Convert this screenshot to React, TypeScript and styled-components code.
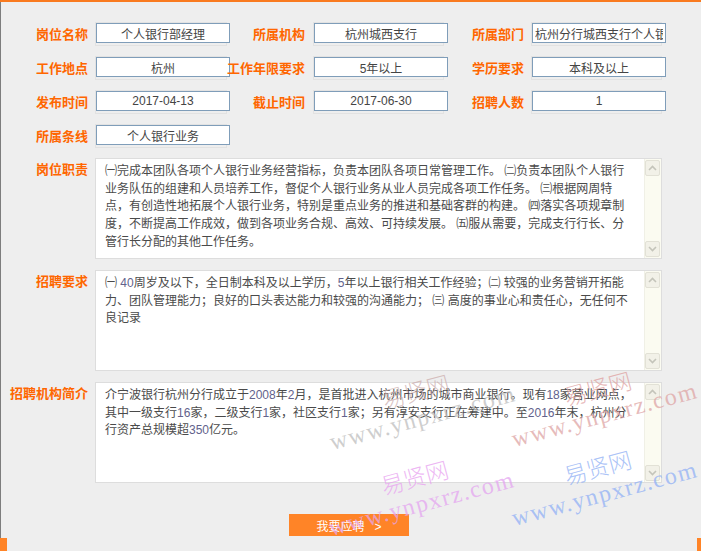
import React from 'react';
import styled, { createGlobalStyle } from 'styled-components';

const GlobalStyle = createGlobalStyle`
  html, body {
    margin: 0;
    padding: 0;
    background: #eeeeee;
  }
  body {
    font-family: "Liberation Sans", "Noto Sans CJK SC", sans-serif;
    font-size: 12px;
    color: #444;
  }
`;

type Field = { label: string; value: string; left?: boolean };

const infoRows: Field[][] = [
  [
    { label: '岗位名称', value: '个人银行部经理' },
    { label: '所属机构', value: '杭州城西支行' },
    { label: '所属部门', value: '杭州分行城西支行个人银行部', left: true },
  ],
  [
    { label: '工作地点', value: '杭州' },
    { label: '工作年限要求', value: '5年以上' },
    { label: '学历要求', value: '本科及以上' },
  ],
  [
    { label: '发布时间', value: '2017-04-13' },
    { label: '截止时间', value: '2017-06-30' },
    { label: '招聘人数', value: '1' },
  ],
  [{ label: '所属条线', value: '个人银行业务' }],
];

const labelPads = [7, 8, 7];

const textBlocks = [
  {
    label: '岗位职责',
    lines: [
      '㈠完成本团队各项个人银行业务经营指标，负责本团队各项日常管理工作。 ㈡负责本团队个人银行',
      '业务队伍的组建和人员培养工作，督促个人银行业务从业人员完成各项工作任务。 ㈢根据网周特',
      '点，有创造性地拓展个人银行业务，特别是重点业务的推进和基础客群的构建。 ㈣落实各项规章制',
      '度，不断提高工作成效，做到各项业务合规、高效、可持续发展。 ㈤服从需要，完成支行行长、分',
      '管行长分配的其他工作任务。',
    ],
  },
  {
    label: '招聘要求',
    lines: [
      '㈠ 40周岁及以下，全日制本科及以上学历，5年以上银行相关工作经验；㈡ 较强的业务营销开拓能',
      '力、团队管理能力；良好的口头表达能力和较强的沟通能力； ㈢ 高度的事业心和责任心，无任何不',
      '良记录',
    ],
  },
  {
    label: '招聘机构简介',
    lines: [
      '介宁波银行杭州分行成立于2008年2月，是首批进入杭州市场的城市商业银行。现有18家营业网点，',
      '其中一级支行16家，二级支行1家，社区支行1家；另有淳安支行正在筹建中。至2016年末，杭州分',
      '行资产总规模超350亿元。',
    ],
  },
];

const watermarks = [
  { x: 419, y: 404, title: 'rgba(205, 175, 175, 0.75)', url: 'rgba(190, 190, 190, 0.75)' },
  { x: 601, y: 401, title: 'rgba(222, 160, 160, 0.75)', url: 'rgba(222, 165, 165, 0.75)' },
  { x: 418, y: 490, title: 'rgba(232, 160, 240, 0.75)', url: 'rgba(228, 165, 240, 0.75)' },
  { x: 601, y: 480, title: 'rgba(150, 180, 245, 0.8)', url: 'rgba(150, 180, 245, 0.8)' },
];

const withNumbers = (line: string) =>
  line.split(/(\d+)/).map((part, i) => (/^\d+$/.test(part) ? <Num key={i}>{part}</Num> : part));

const Chevron = ({ up }: { up?: boolean }) => (
  <svg width="9" height="6" viewBox="0 0 9 6">
    <polyline
      points={up ? '1,5 4.5,1.5 8,5' : '1,1 4.5,4.5 8,1'}
      fill="none"
      stroke="#c4c4ba"
      strokeWidth="1.6"
    />
  </svg>
);

export default function App() {
  return (
    <Page>
      <GlobalStyle />
      <TopBar />
      <Panel>
        <InfoGrid>
          {infoRows.map((row) =>
            row.map((f, i) => (
              <React.Fragment key={f.label}>
                <Label $pad={labelPads[i]}>{f.label}</Label>
                <FieldBox>
                  <Input readOnly value={f.value} $left={f.left} />
                </FieldBox>
              </React.Fragment>
            ))
          )}
        </InfoGrid>

        <Blocks>
          {textBlocks.map((b) => (
            <BlockRow key={b.label}>
              <BlockLabel>{b.label}</BlockLabel>
              <TextBox>
                <TextContent>
                  {b.lines.map((l, i) => (
                    <Line key={i}>{withNumbers(l)}</Line>
                  ))}
                </TextContent>
                <ScrollBar>
                  <ScrollBtn>
                    <Chevron up />
                  </ScrollBtn>
                  <ScrollBtn>
                    <Chevron />
                  </ScrollBtn>
                </ScrollBar>
              </TextBox>
            </BlockRow>
          ))}
        </Blocks>

        <ButtonRow>
          <ApplyButton>
            我要应聘<Arrow>&gt;</Arrow>
          </ApplyButton>
        </ButtonRow>
      </Panel>
      <BottomStrip>
        <Corner $w={7} />
        <Corner $w={4} />
      </BottomStrip>

      {watermarks.map((w, i) => (
        <Watermark key={i} style={{ left: w.x, top: w.y }}>
          <MarkTitle style={{ color: w.title }}>易贤网</MarkTitle>
          <MarkUrl style={{ color: w.url }}>www.ynpxrz.com</MarkUrl>
        </Watermark>
      ))}
    </Page>
  );
}

const Page = styled.div`
  position: relative;
  width: 701px;
  height: 551px;
  overflow: hidden;
  display: flex;
  flex-direction: column;
`;

const TopBar = styled.div`
  height: 2px;
  background: #f97a1f;
`;

const Panel = styled.div`
  height: 536px;
  border-left: 1px solid #7d7d7d;
  padding-top: 20px;
  box-sizing: border-box;
  display: flex;
  flex-direction: column;
`;

const InfoGrid = styled.div`
  display: grid;
  grid-template-columns: 94px 132px 86px 131px 87px 131px;
  grid-auto-rows: 24px;
  row-gap: 10px;
`;

const Label = styled.div<{ $pad: number }>`
  display: flex;
  align-items: center;
  justify-content: flex-end;
  padding-right: ${(p) => p.$pad}px;
  padding-bottom: 2px;
  font-family: "Noto Sans CJK SC", sans-serif;
  font-size: 13px;
  font-weight: 700;
  color: #ff6600;
  white-space: nowrap;
`;

const FieldBox = styled.div`
  box-sizing: border-box;
  height: 24px;
  border: 1px solid #e2e2e2;
`;

const Input = styled.input<{ $left?: boolean }>`
  display: block;
  box-sizing: border-box;
  width: 134px;
  height: 20px;
  margin: 0;
  padding: 0 2px;
  border: 1px solid #7f9db9;
  background: #fff;
  font-family: "Liberation Sans", "Noto Sans CJK SC", sans-serif;
  font-size: 12px;
  color: #444;
  text-align: ${(p) => (p.$left ? 'left' : 'center')};
  outline: none;
`;

const Blocks = styled.div`
  margin-top: 10px;
  display: flex;
  flex-direction: column;
  gap: 11px;
`;

const BlockRow = styled.div`
  display: flex;
`;

const BlockLabel = styled.div`
  width: 87px;
  padding-top: 4px;
  text-align: right;
  font-family: "Noto Sans CJK SC", sans-serif;
  font-size: 13px;
  line-height: 13px;
  font-weight: 700;
  color: #ff6600;
  white-space: nowrap;
  margin-right: 7px;
`;

const TextBox = styled.div`
  box-sizing: border-box;
  width: 567px;
  height: 101px;
  border: 1px solid #dddddd;
  background: #fff;
  display: flex;
`;

const TextContent = styled.div`
  flex: 1;
  padding: 4px 9px;
  overflow: hidden;
`;

const Line = styled.div`
  white-space: nowrap;
  line-height: 17.7px;
  font-size: 12px;
  color: #4a4a4a;
`;

const Num = styled.span`
  color: #62628c;
`;

const ScrollBar = styled.div`
  width: 16px;
  background: #fbfbf1;
  border-left: 1px solid #f0f0e6;
  display: flex;
  flex-direction: column;
  justify-content: space-between;
  padding: 1px 0;
`;

const ScrollBtn = styled.div`
  box-sizing: border-box;
  height: 16px;
  margin: 0 1px 0 0;
  background: #f2f1e8;
  border: 1px solid #e2e1d6;
  border-radius: 2px;
  display: flex;
  align-items: center;
  justify-content: center;
`;

const ButtonRow = styled.div`
  margin-top: 31px;
  display: flex;
  padding-left: 288px;
`;

const ApplyButton = styled.button`
  width: 120px;
  height: 22px;
  border: none;
  padding: 0;
  background: #ff8427;
  color: #fff;
  font-family: "Noto Sans CJK SC", sans-serif;
  font-size: 12px;
  cursor: pointer;
`;

const Arrow = styled.span`
  margin-left: 10px;
  font-family: "Liberation Sans", sans-serif;
`;

const BottomStrip = styled.div`
  height: 13px;
  display: flex;
  justify-content: space-between;
`;

const Corner = styled.div<{ $w: number }>`
  width: ${(p) => p.$w}px;
  background: #ff8427;
`;

const Watermark = styled.div`
  position: absolute;
  transform: translate(-50%, -50%) rotate(-15deg);
  display: flex;
  flex-direction: column;
  align-items: center;
  pointer-events: none;
  white-space: nowrap;
`;

const MarkTitle = styled.div`
  font-family: "Noto Sans CJK SC", serif;
  font-size: 23px;
  line-height: 28px;
  font-weight: 300;
  letter-spacing: 0px;
`;

const MarkUrl = styled.div`
  font-family: "Liberation Serif", serif;
  font-size: 24px;
  line-height: 28px;
  letter-spacing: 1.5px;
`;
